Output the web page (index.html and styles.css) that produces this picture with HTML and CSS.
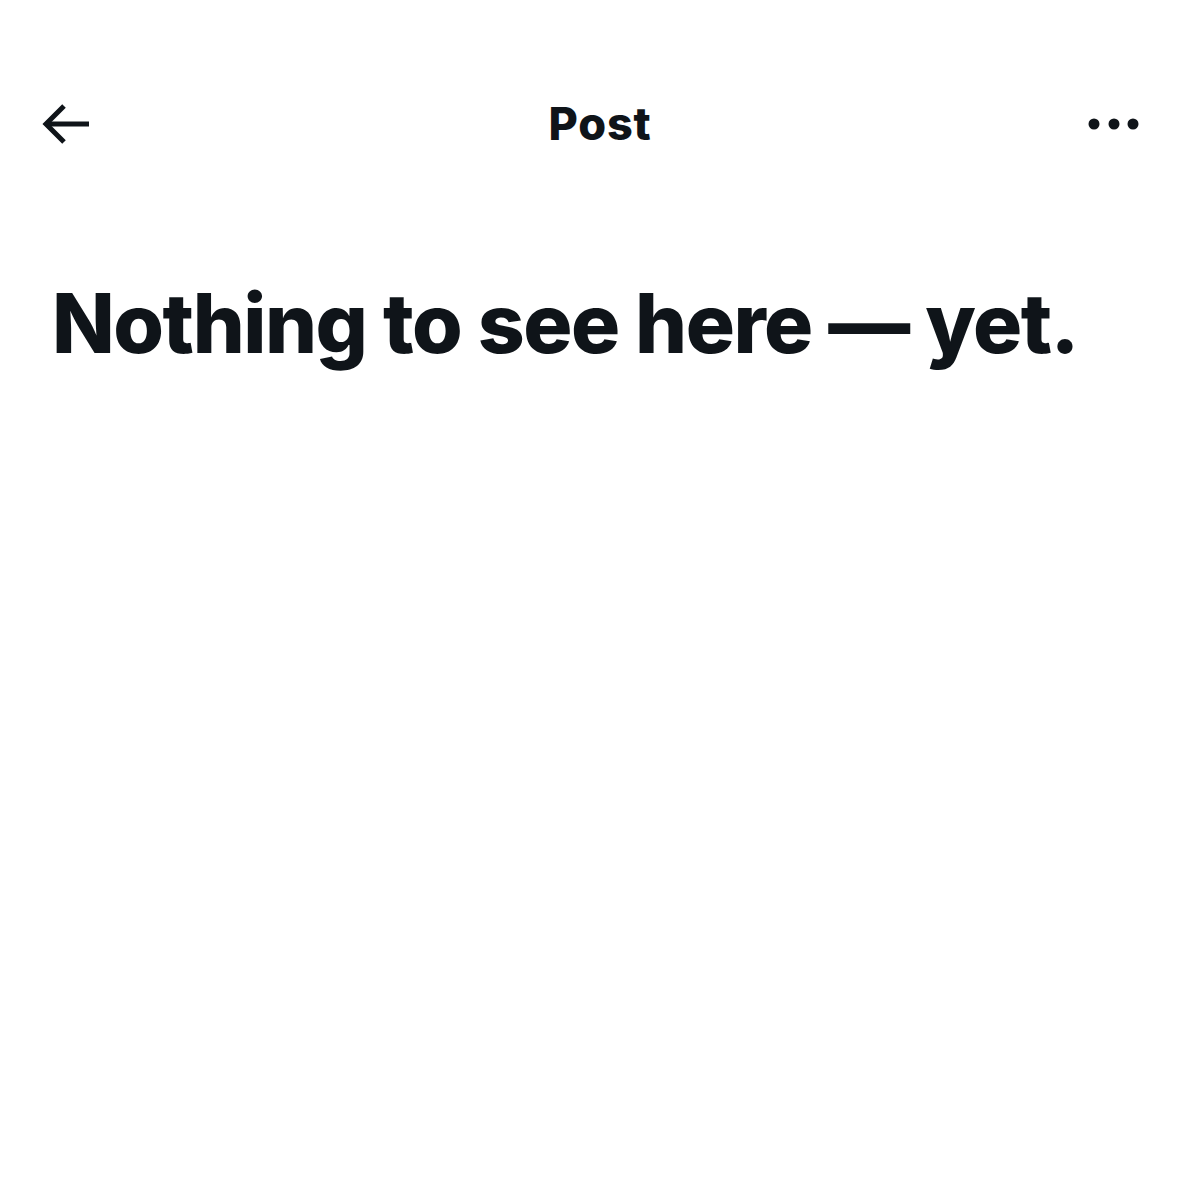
FILE: index.html
```html
<!DOCTYPE html>
<html lang="en">
<head>
    <meta charset="UTF-8">
    <meta name="viewport" content="width=device-width, initial-scale=1.0">
    <title>Post</title>
    <link rel="stylesheet" href="styles.css">
</head>
<body>

<div class="page">
    <header class="topbar">
        <button class="icon-btn back" aria-label="Back">
            <svg width="50" height="42" viewBox="0 0 50 42" fill="none" stroke="#0f1419" stroke-width="5">
                <polyline points="22,3 4,21 22,39"/>
                <line x1="5" y1="21" x2="47" y2="21"/>
            </svg>
        </button>
        <h1 class="title">Post</h1>
        <button class="icon-btn more" aria-label="More">
            <svg width="52" height="12" viewBox="0 0 52 12" fill="#0f1419">
                <circle cx="6" cy="6" r="5.5"/>
                <circle cx="26" cy="6" r="5.5"/>
                <circle cx="45" cy="6" r="5.5"/>
            </svg>
        </button>
    </header>

    <section class="empty">
        <h2>Nothing to see here — yet.</h2>
    </section>
</div>

</body>
</html>
```

FILE: styles.css
```css
body {
    margin: 0;
    background-color: #ffffff;
    color: #0f1419;
    font-family: Inter, "Noto Sans", sans-serif;
}
.page {
    width: 1200px;
    min-height: 1200px;
}
.topbar {
    display: grid;
    grid-template-columns: 1fr auto 1fr;
    align-items: center;
    height: 48px;
    padding: 100px 42px 0 42px;
}
.icon-btn {
    background: none;
    border: none;
    padding: 0;
    margin: 0;
    display: flex;
    align-items: center;
    cursor: pointer;
}
.back {
    justify-self: start;
}
.more {
    justify-self: end;
    margin-right: 18px;
}
.title {
    margin: 0;
    font-size: 45px;
    font-weight: 800;
    letter-spacing: 0.8px;
    line-height: 48px;
}
.empty {
    padding: 0 52px;
    margin-top: 128px;
}
.empty h2 {
    margin: 0;
    font-size: 82px;
    font-weight: 800;
    letter-spacing: -1.5px;
    line-height: 96px;
}
```
